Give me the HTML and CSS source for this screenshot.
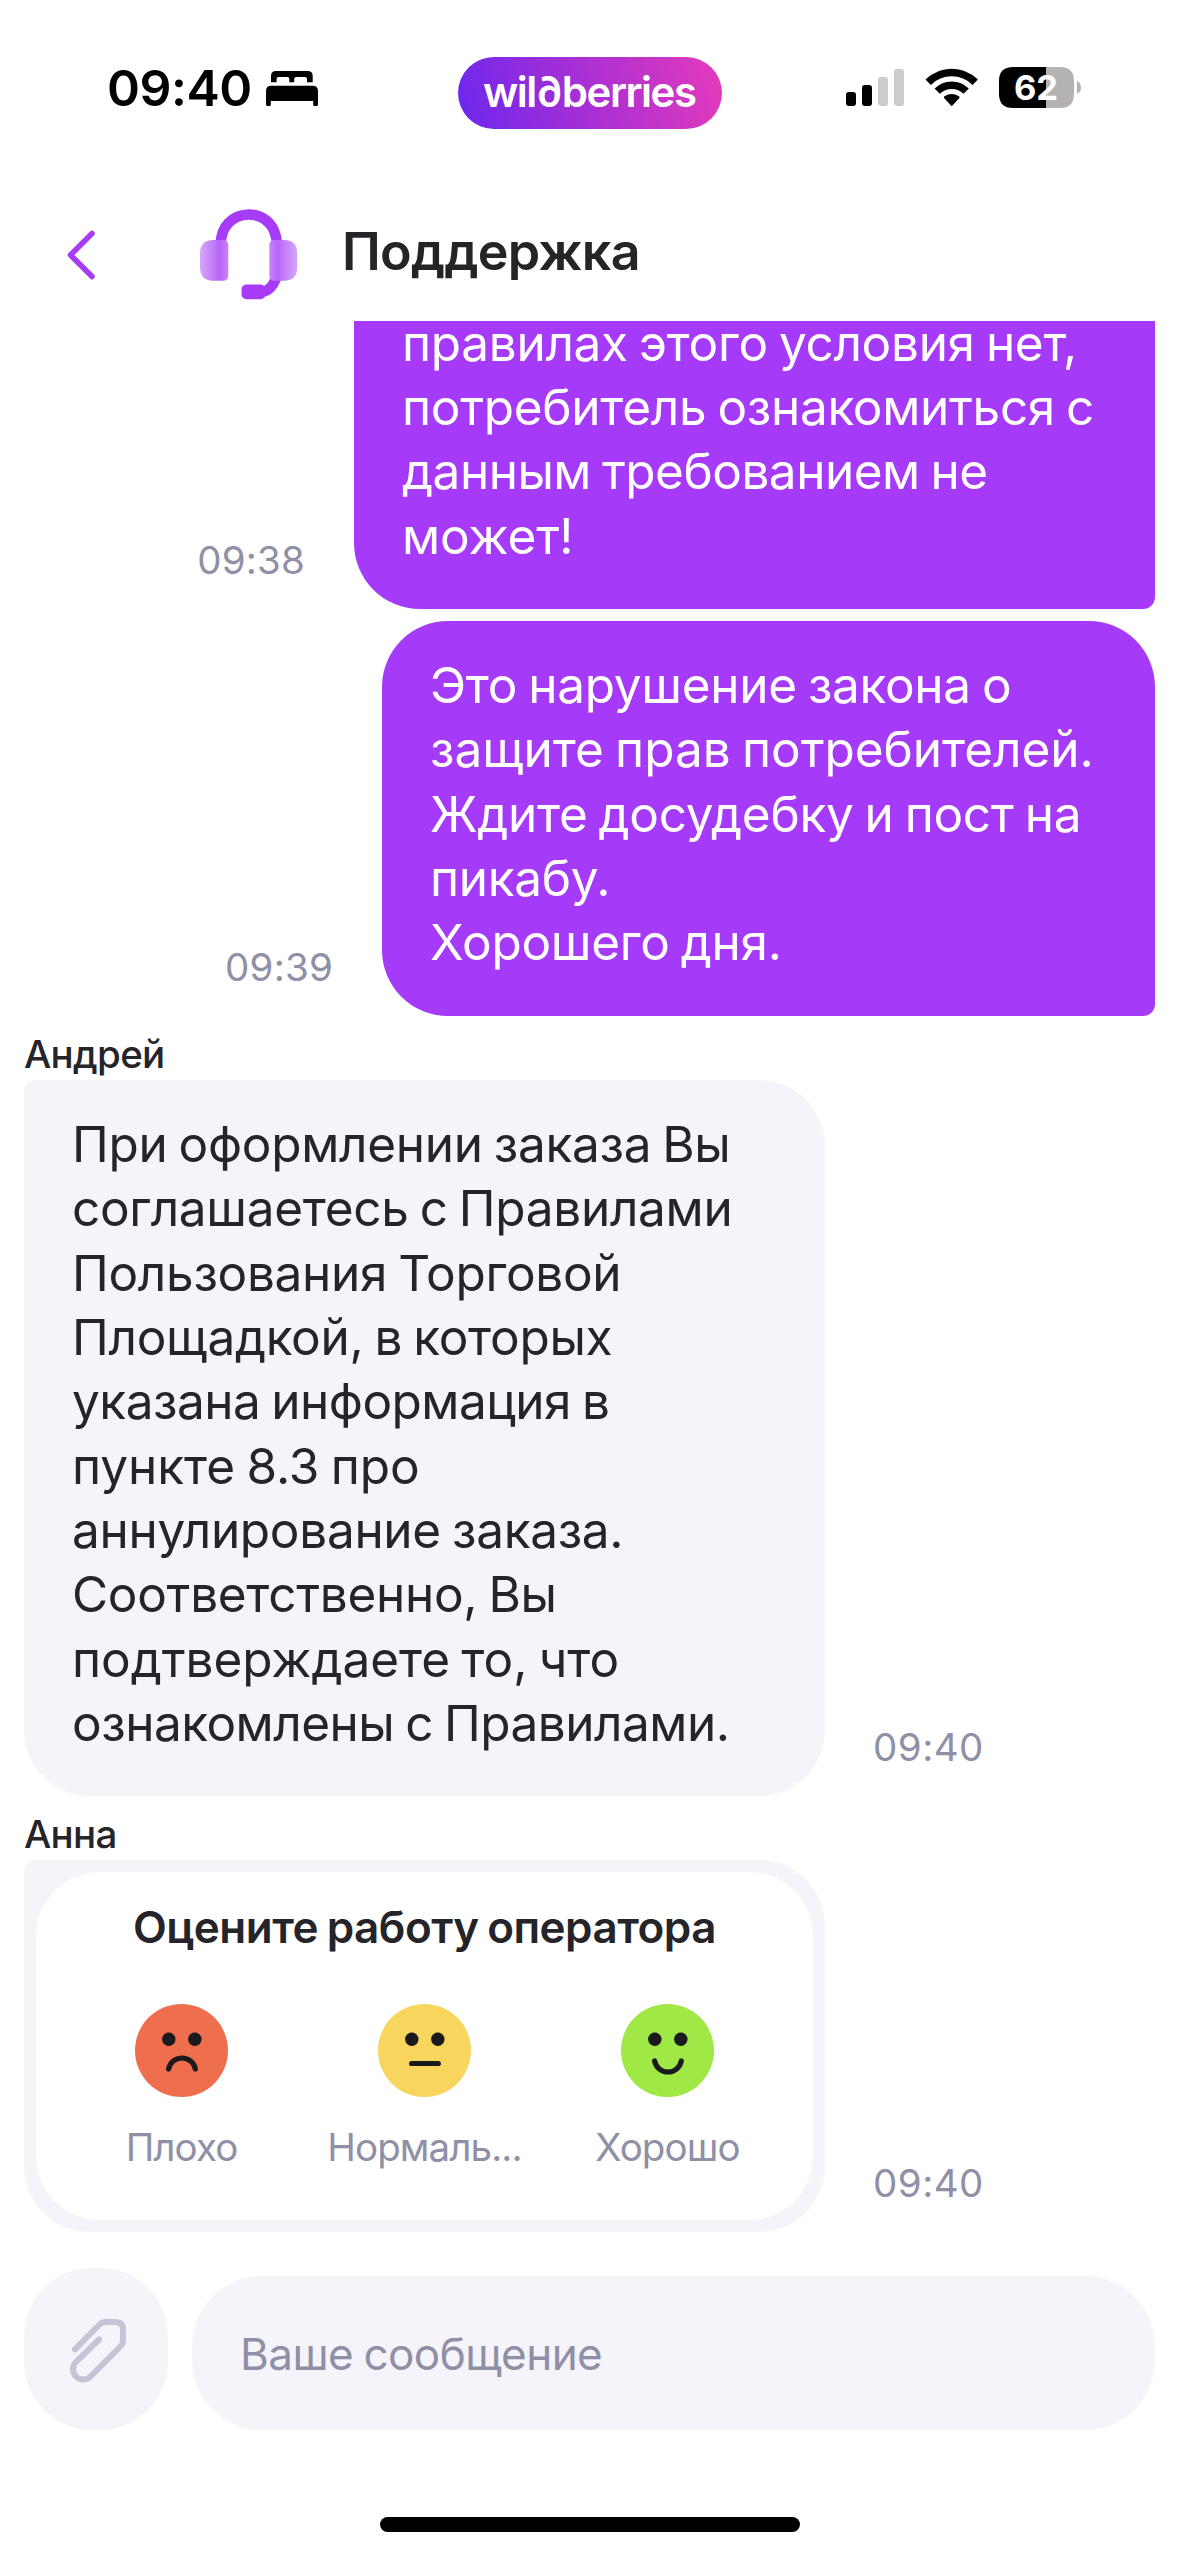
FILE: index.html
```html
<!DOCTYPE html>
<html lang="ru">
<head>
<meta charset="utf-8">
<title>Поддержка</title>
<link rel="stylesheet" href="styles.css">
</head>
<body>
<div class="screen">
  <div class="status">
    <div class="status-left">
      <span class="clock">09:40</span>
      <svg class="bed" viewBox="260 57 64 72" width="64" height="72">
        <path d="M271 82.300V76Q271 71 276 71H307.700Q312.700 71 312.700 76V82.300H307V79Q307 77 305 77H296Q294.200 77 294.200 79V82.300H289.300V79Q289.300 77 287.500 77H278.600Q276.600 77 276.600 79V82.300Z"/>
        <path d="M266 91Q266 85.700 271.500 85.700H312.500Q318 85.700 318 91V104.500Q318 106 316.500 106H314.500Q313.200 106 313.200 104.500V101H270.800V104.500Q270.800 106 269.500 106H267.500Q266 106 266 104.500Z"/>
      </svg>
    </div>
    <div class="brand">
      <svg viewBox="0 0 264 72" width="264" height="72">
        <text class="brand-text" x="25" y="50" textLength="214">wil∂berries</text>
      </svg>
    </div>
    <svg viewBox="722 57 457 72" width="457" height="72">
      <rect x="846" y="92" width="10" height="14" rx="3"/>
      <rect x="862" y="85" width="10" height="21" rx="3"/>
      <rect class="dim" x="878" y="77" width="10" height="29" rx="3"/>
      <rect class="dim" x="894" y="69" width="10" height="37" rx="3"/>
      <g class="wifi">
        <path d="M928.200 82.200A33.200 33.200 0 0 1 975.200 82.200" stroke-width="7.600"/>
        <path d="M937.200 91.200A20.500 20.500 0 0 1 966.200 91.200" stroke-width="7.400"/>
      </g>
      <path d="M951.700 106.200L944 98Q943.600 97 944.500 96.300Q951.700 91.500 958.900 96.300Q959.800 97 959.400 98Z"/>
      <path d="M1046 67H1013Q999 67 999 81V94Q999 108 1013 108H1046Z"/>
      <path class="battery-rest" d="M1046 67H1060Q1074 67 1074 81V94Q1074 108 1060 108H1046Z"/>
      <path class="battery-rest" d="M1077 81Q1081 83 1081 87.500Q1081 92 1077 94Z"/>
      <text class="battery-text" x="1036" y="100" text-anchor="middle">62</text>
    </svg>
  </div>

  <div class="header">
    <svg viewBox="0 177 180 144" width="180" height="144">
      <path class="chevron" d="M92 233.500L70.500 255L92 276.500"/>
    </svg>
    <svg viewBox="0 -13 140 144" width="140" height="144">
      <defs>
        <linearGradient id="muffL"><stop offset="0" stop-color="#d4a8fa"/><stop offset=".7" stop-color="#b966f7"/><stop offset="1" stop-color="#c885f9"/></linearGradient>
        <linearGradient id="muffR"><stop offset="0" stop-color="#c885f9"/><stop offset=".3" stop-color="#b966f7"/><stop offset="1" stop-color="#d4a8fa"/></linearGradient>
      </defs>
      <path class="band" d="M40.500 54Q41.500 40 48.500 33A28.300 28.300 0 0 1 89 33Q96 40 97 54"/>
      <path class="band" d="M96 88Q91 101.500 81 102"/>
      <rect class="mic" x="61.500" y="94.500" width="24" height="14.800" rx="5"/>
      <path fill="url(#muffL)" d="M33 50H43Q48.300 50 48.300 55V86Q48.300 90.700 43 90.700H33Q20 90.700 20 77V64Q20 50 33 50Z"/>
      <path fill="url(#muffR)" d="M104 50H94.500Q89.300 50 89.300 55V86Q89.300 90.700 94.500 90.700H104Q117.300 90.700 117.300 77V64Q117.300 50 104 50Z"/>
    </svg>
    <h1 class="title">Поддержка</h1>
  </div>

  <div class="chat">
    <div class="row mine">
      <span class="time">09:38</span>
      <div class="bubble out cut w801">
        <span class="line">правилах этого условия нет,</span>
        <span class="line">потребитель ознакомиться с</span>
        <span class="line tight">данным требованием не</span>
        <span class="line loose">может!</span>
      </div>
    </div>
    <div class="row mine follow">
      <span class="time">09:39</span>
      <div class="bubble out w773">
        <span class="line">Это нарушение закона о</span>
        <span class="line loose">защите прав потребителей.</span>
        <span class="line">Ждите досудебку и пост на</span>
        <span class="line">пикабу.</span>
        <span class="line">Хорошего дня.</span>
      </div>
    </div>
    <div class="name">Андрей</div>
    <div class="row">
      <div class="bubble in w801">
        <span class="line">При оформлении заказа Вы</span>
        <span class="line">соглашаетесь с Правилами</span>
        <span class="line">Пользования Торговой</span>
        <span class="line">Площадкой, в которых</span>
        <span class="line tight">указана информация в</span>
        <span class="line loose">пункте 8.3 про</span>
        <span class="line">аннулирование заказа.</span>
        <span class="line">Соответственно, Вы</span>
        <span class="line loose">подтверждаете то, что</span>
        <span class="line tight">ознакомлены с Правилами.</span>
      </div>
      <span class="time">09:40</span>
    </div>
    <div class="name">Анна</div>
    <div class="row">
      <div class="survey">
        <div class="survey-card">
          <h2 class="survey-title">Оцените работу оператора</h2>
          <div class="options">
            <div class="option">
              <svg viewBox="0 0 93 93" width="93" height="93">
                <circle class="bad" cx="46.500" cy="46.500" r="46.500"/>
                <circle class="eye" cx="33.800" cy="35.300" r="6.700"/><circle class="eye" cx="59.800" cy="35.300" r="6.700"/>
                <path class="mouth" d="M33.600 65A13.600 13.600 0 0 1 60.300 65"/>
              </svg>
              <span class="label">Плохо</span>
            </div>
            <div class="option">
              <svg viewBox="0 0 93 93" width="93" height="93">
                <circle class="fair" cx="46.500" cy="46.500" r="46.500"/>
                <circle class="eye" cx="33.800" cy="35.300" r="6.700"/><circle class="eye" cx="59.800" cy="35.300" r="6.700"/>
                <path class="mouth" d="M33.600 59.500H60.300"/>
              </svg>
              <span class="label">Нормаль...</span>
            </div>
            <div class="option">
              <svg viewBox="0 0 93 93" width="93" height="93">
                <circle class="good" cx="46.500" cy="46.500" r="46.500"/>
                <circle class="eye" cx="33.800" cy="35.300" r="6.700"/><circle class="eye" cx="59.800" cy="35.300" r="6.700"/>
                <path class="mouth" d="M33.600 57A13.600 13.600 0 0 0 60.300 57"/>
              </svg>
              <span class="label">Хорошо</span>
            </div>
          </div>
        </div>
      </div>
      <span class="time">09:40</span>
    </div>
  </div>

  <div class="composer">
    <div class="attach">
      <svg viewBox="24 2268 144 162" width="144" height="162">
        <path class="clip" d="M75 2349.300L99.500 2324.500Q102 2322 106 2322H115Q123 2322 123 2330V2340Q123 2344 120 2347L90.500 2376.500A10.250 10.250 0 0 1 76 2362L99 2339.500"/>
      </svg>
    </div>
    <div class="field">Ваше сообщение</div>
  </div>
  <div class="home"></div>
</div>
</body>
</html>
```
FILE: styles.css
```css
* { box-sizing: border-box; }
body {
  margin: 0;
  background: #fff;
  color: #242429;
  font-family: Inter, "Noto Sans", sans-serif;
}
svg { display: block; flex: none; }
.screen {
  width: 1179px;
  height: 2556px;
  display: flex;
  flex-direction: column;
}

.status {
  display: flex;
  height: 177px;
  padding-top: 57px;
  flex: none;
}
.status-left { display: flex; width: 458px; padding-left: 107px; }
.clock {
  width: 153px;
  color: #000;
  font-size: 50px;
  font-weight: 600;
  line-height: 63px;
  letter-spacing: -0.5px;
}
.brand {
  width: 264px;
  height: 72px;
  border-radius: 36px;
  background: linear-gradient(75deg, #6b27ee 0%, #a42fd6 45%, #e53bba 100%);
}
.brand-text { fill: #fff; font-size: 42px; font-weight: 600; }
.dim { fill: #ccc; }
.wifi path { fill: none; stroke: #000; }
.battery-rest { fill: #b3b3b3; }
.battery-text { fill: #fff; font-size: 34.500px; font-weight: 700; }

.header { display: flex; height: 144px; flex: none; }
.chevron { fill: none; stroke: #a63cf7; stroke-width: 5.500; stroke-linecap: round; stroke-linejoin: round; }
.band { fill: none; stroke: #a63cf7; stroke-width: 10.500; }
.mic { fill: #a63cf7; }
.title {
  margin: 0 0 0 22px;
  font-size: 52px;
  font-weight: 600;
  line-height: 149px;
  letter-spacing: -0.700px;
}

.chat {
  height: 1935px;
  padding: 0 24px 24px;
  display: flex;
  flex-direction: column;
  justify-content: flex-end;
  flex: none;
}
.row { display: flex; align-items: flex-end; gap: 48px; flex: none; }
.mine { justify-content: flex-end; }
.follow { margin-top: 12px; }
.time {
  margin-bottom: 25px;
  color: #8f8fa6;
  font-size: 38.500px;
  line-height: 47px;
  letter-spacing: 0.500px;
}
.mine .time { margin-right: 1px; letter-spacing: 0.200px; }
.bubble {
  padding: 32px 0 40.500px 48px;
  font-size: 49.500px;
  line-height: 64.350px;
  letter-spacing: -0.300px;
  word-spacing: -2.500px;
}
.w801 { width: 801px; }
.w773 { width: 773px; padding-bottom: 41.250px; }
.line { display: block; white-space: nowrap; }
.tight { letter-spacing: -0.500px; }
.loose { letter-spacing: -0.050px; }
.in { background: #f5f4fa; border-radius: 12px 66px 66px 66px; }
.out { background: #a63af9; color: #fff; border-radius: 66px 66px 12px 66px; }
.cut {
  display: flex;
  flex-direction: column;
  justify-content: flex-end;
  height: 288px;
  padding-top: 0;
  padding-bottom: 41px;
  border-top-left-radius: 0;
  border-top-right-radius: 0;
}
.name {
  height: 64px;
  padding-top: 15px;
  font-size: 38.500px;
  font-weight: 550;
  line-height: 47px;
  letter-spacing: -0.700px;
  flex: none;
}

.survey {
  width: 801px;
  height: 372px;
  padding: 12px;
  background: #f5f4fa;
  border-radius: 12px 66px 66px 66px;
}
.survey-card {
  height: 348px;
  padding: 28px 24px 0;
  background: #fff;
  border-radius: 64px;
}
.survey-title {
  margin: 0 0 50px;
  font-size: 44px;
  font-weight: 600;
  line-height: 54px;
  letter-spacing: -0.500px;
  word-spacing: -2px;
  text-align: center;
}
.options { display: grid; grid-template-columns: repeat(3, 243px); }
.option { display: flex; flex-direction: column; align-items: center; gap: 27px; }
.label { color: #8f8fa6; font-size: 38.500px; line-height: 47px; letter-spacing: -0.900px; }
.bad { fill: #ee6e4d; }
.fair { fill: #f8d65d; }
.good { fill: #9fe846; }
.eye { fill: #1a1a1c; }
.mouth { fill: none; stroke: #1a1a1c; stroke-width: 5.200; stroke-linecap: round; }

.composer {
  display: flex;
  align-items: flex-end;
  gap: 24px;
  height: 174px;
  padding: 0 24px;
  flex: none;
}
.attach { width: 144px; height: 162px; border-radius: 68px; background: #f5f4fa; }
.clip { fill: none; stroke: #c5c3d6; stroke-width: 6; stroke-linecap: round; stroke-linejoin: round; }
.field {
  width: 963px;
  height: 154px;
  padding-left: 48px;
  border-radius: 70px;
  background: #f5f4fa;
  color: #8f8fa6;
  font-size: 44px;
  line-height: 156px;
  letter-spacing: -0.550px;
  word-spacing: -1.500px;
}
.home {
  width: 420px;
  height: 15px;
  margin: 87px auto 0;
  border-radius: 8px;
  background: #000;
  flex: none;
}
```
